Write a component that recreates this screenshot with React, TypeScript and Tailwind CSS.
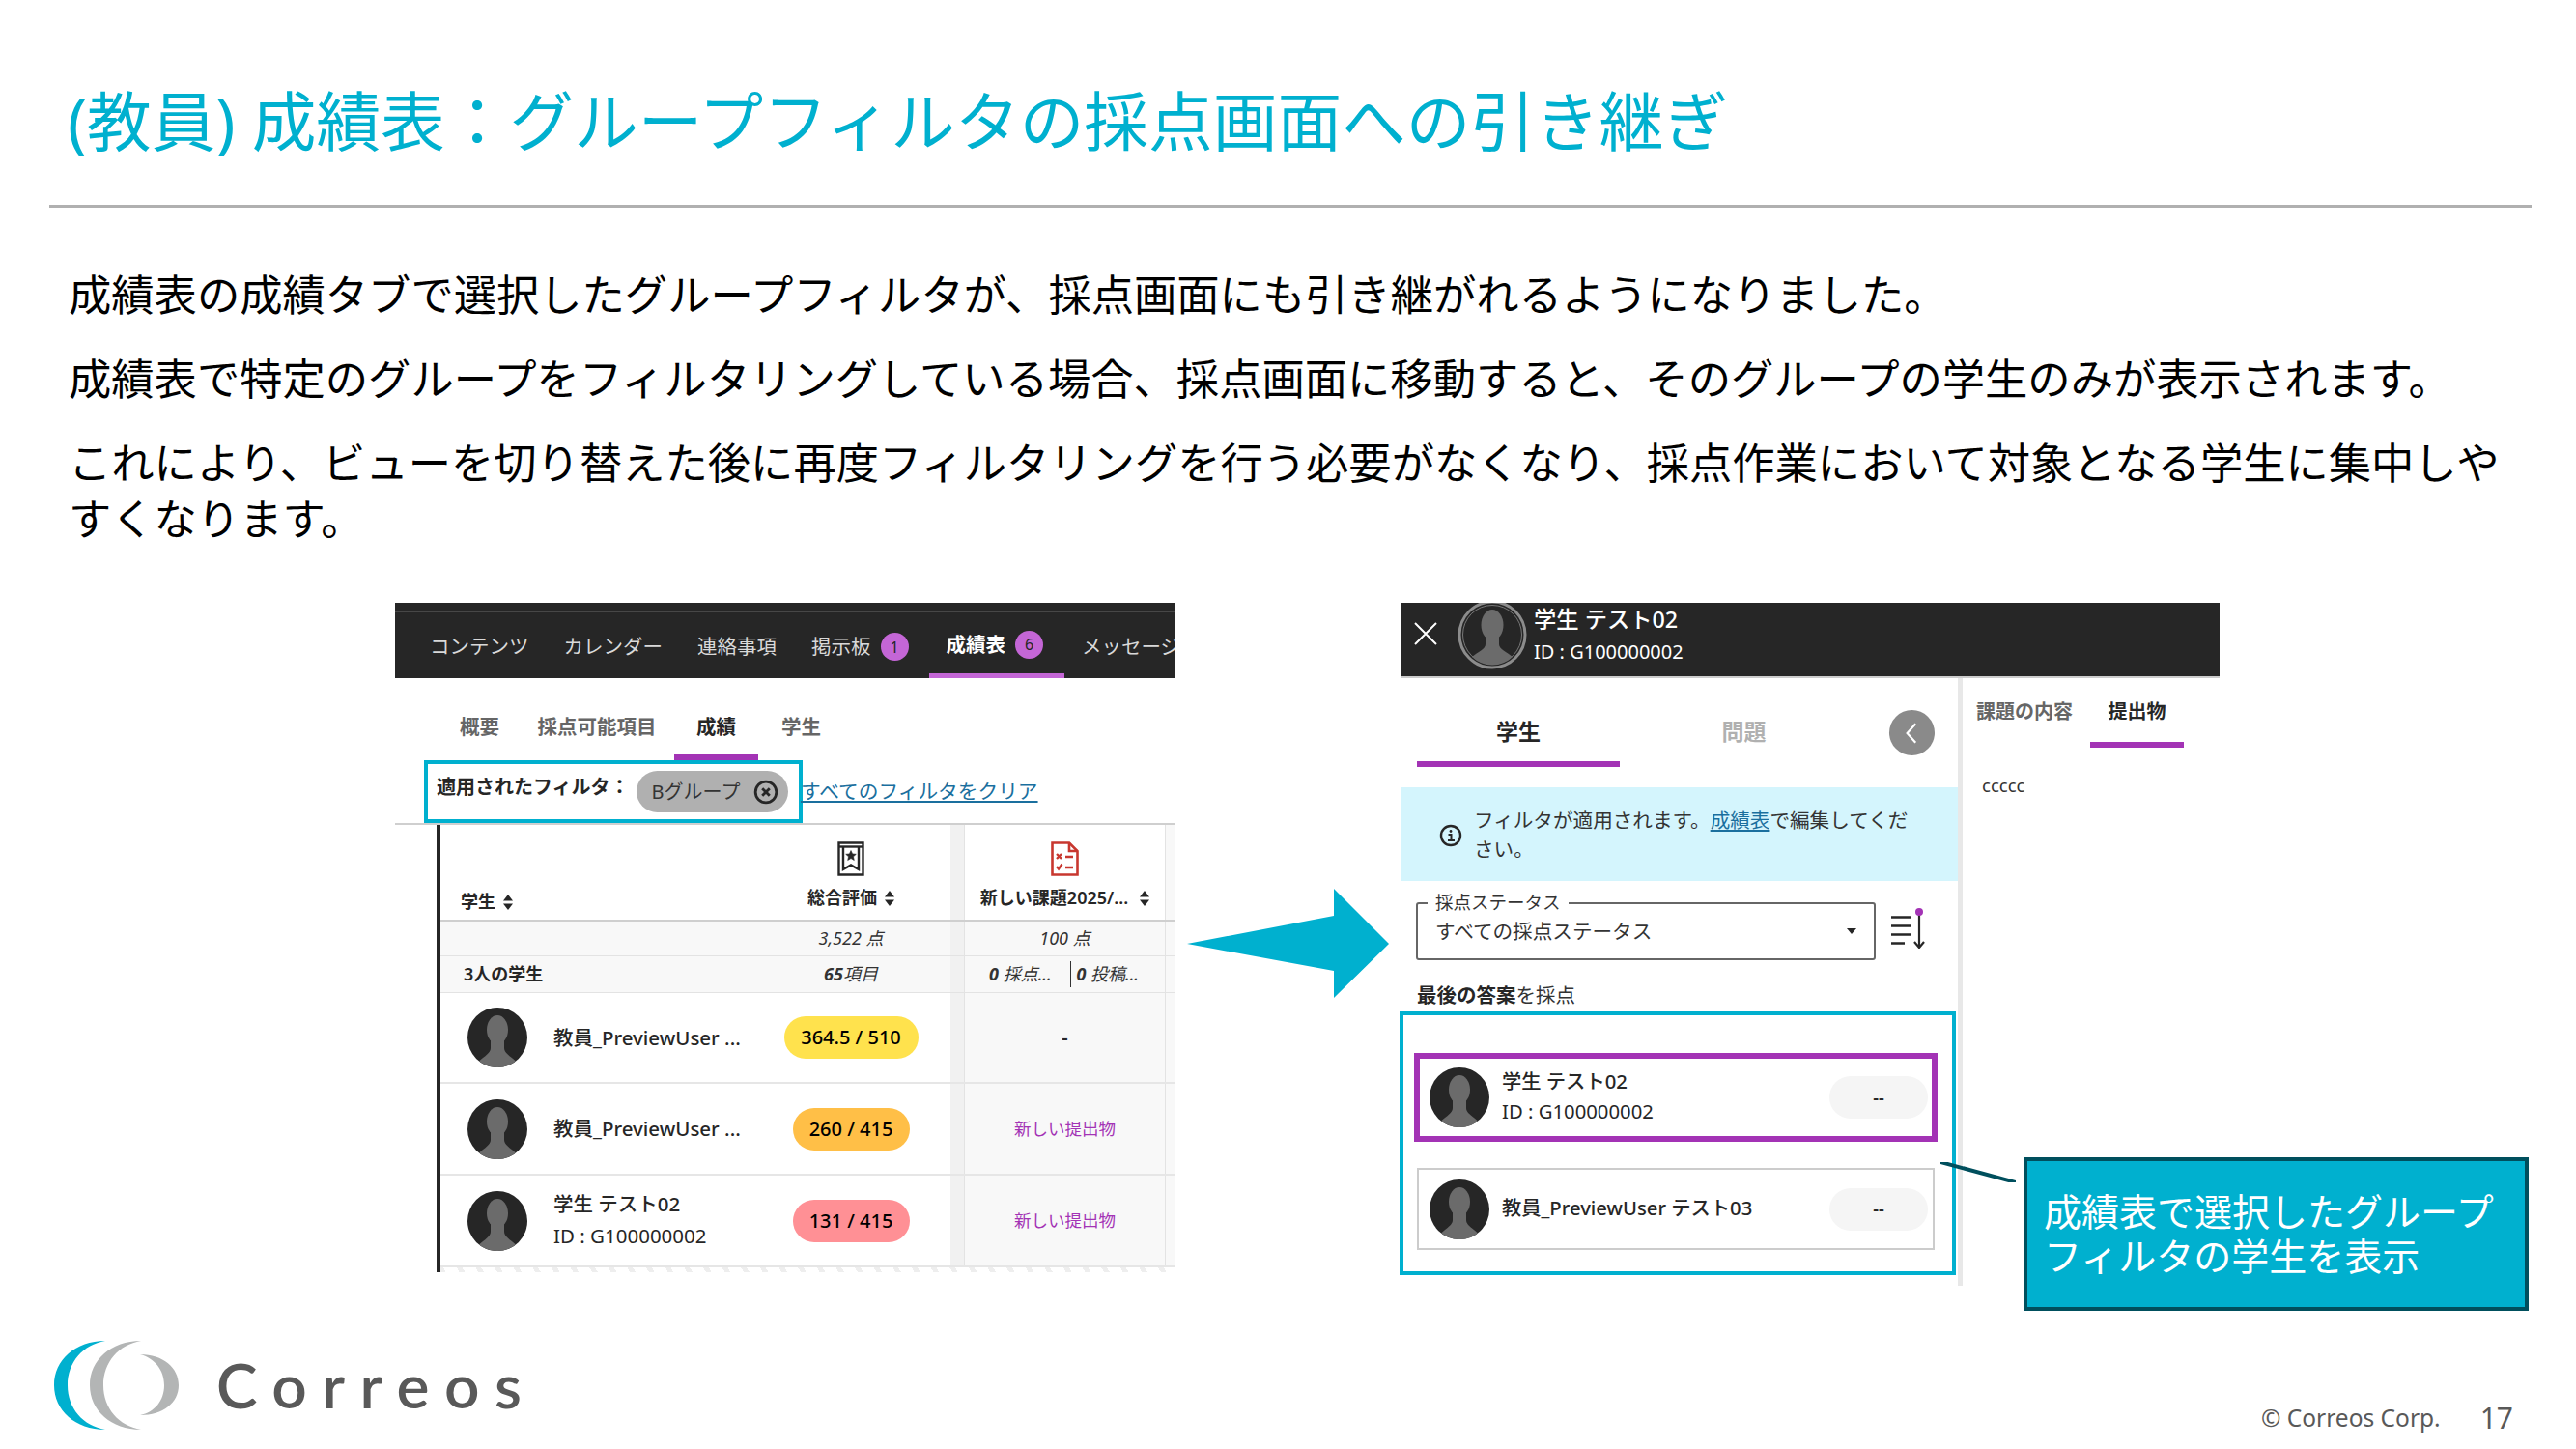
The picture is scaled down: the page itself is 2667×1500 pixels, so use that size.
import { ReactNode } from 'react';

const FONT = "font-['Noto_Sans','Noto_Sans_CJK_JP',sans-serif]";

function Avatar({ className }: { className: string }) {
  return (
    <svg viewBox="0 0 62 62" className={className}>
      <circle cx="31" cy="31" r="31" fill="#262626" />
      <ellipse cx="31" cy="23" rx="11" ry="15" fill="#6b6b6b" />
      <path d="M24 34V42C24 47 18 50 12 55.5A31 31 0 0 0 50 55.5C44 50 38 47 38 42V34Z" fill="#6b6b6b" />
    </svg>
  );
}

function SortArrows() {
  return (
    <svg viewBox="0 0 10 16" className="w-[10px] h-[16px] shrink-0" fill="#262626">
      <path d="M5 0 10 6.5H0Z" />
      <path d="M5 16 0 9.5H10Z" />
    </svg>
  );
}

function GradebookIcon() {
  return (
    <svg viewBox="0 0 28 36" className="w-[28px] h-[36px]" fill="none" stroke="#262626" strokeWidth="2.4">
      <path d="M1.5 1.5H26.5V34.5H1.5Z" />
      <path d="M1.5 5.5H26.5" />
      <path d="M6 6V29L14 24.5 22 29V6" />
      <path d="M14 9.5l1.6 3.4 3.7.4-2.8 2.5.8 3.7-3.3-1.9-3.3 1.9.8-3.7-2.8-2.5 3.7-.4Z" fill="#262626" strokeWidth="0.6" />
    </svg>
  );
}

function AssignmentIcon() {
  return (
    <svg viewBox="0 0 29 36" className="w-[29px] h-[36px]" fill="none" stroke="#c8372f" strokeWidth="2.6">
      <path d="M1.5 1.5H19L27.5 10V34.5H1.5Z" />
      <path d="M19 1.5V10H27.5" />
      <path d="M6 13l5 5M11 13l-5 5M15 16H23M6 26l2 2.5 3.5-5M15 27H23" strokeWidth="2.4" />
    </svg>
  );
}

function Row({
  student,
  score,
  last,
  className = '',
  lastClassName = 'bg-[#f8f8f8]',
}: {
  student: ReactNode;
  score: ReactNode;
  last: ReactNode;
  className?: string;
  lastClassName?: string;
}) {
  return (
    <div className={`grid grid-cols-[322px_206px_15px_208px_9px] ${className}`}>
      <div className="flex items-center min-w-0">{student}</div>
      <div className="flex items-center justify-center">{score}</div>
      <div className="bg-[#f1f1f1] border-r border-[#e3e3e3]" />
      <div className={`flex items-center justify-center border-r border-[#e3e3e3] ${lastClassName}`}>{last}</div>
      <div className="bg-[#f8f8f8]" />
    </div>
  );
}

function StudentName({ name, id }: { name: string; id?: boolean }) {
  return (
    <div className="flex items-center pl-[28px] gap-[27px] text-[20.5px] text-[#262626]">
      <Avatar className="w-[62px] h-[62px] shrink-0" />
      <div>
        <div className="font-medium leading-[31px] whitespace-nowrap">{name}</div>
        {id && <div className="leading-[34px] whitespace-nowrap">ID : G100000002</div>}
      </div>
    </div>
  );
}

function ScorePill({ text, className }: { text: string; className: string }) {
  return (
    <div className={`h-[44px] rounded-full flex items-center justify-center text-[20px] font-medium text-black ${className}`}>
      {text}
    </div>
  );
}

function GradebookPanel() {
  const navItems = ['コンテンツ', 'カレンダー', '連絡事項'];
  return (
    <div className="w-[807px] shrink-0">
      <div className="h-[78px] bg-[#262626] pt-[9px] overflow-hidden">
        <div className="h-[69px] border-t border-[#474747] flex pl-[18px] text-[20.5px] text-[#d9d9d9] whitespace-nowrap">
          {navItems.map((item) => (
            <div key={item} className="h-[68px] px-[18px] pt-[3px] flex items-center">
              {item}
            </div>
          ))}
          <div className="h-[68px] px-[18px] pt-[3px] flex items-center gap-[10px]">
            掲示板
            <span className="w-[29px] h-[29px] rounded-full bg-[#c466d6] text-[#262626] text-[16px] flex items-center justify-center">1</span>
          </div>
          <div className="h-[68px] ml-[3px] pl-[18px] pr-[22px] pt-[8px] pb-[5px] border-b-[5px] border-[#c466d6] flex items-center gap-[10px] font-bold text-white">
            成績表
            <span className="w-[29px] h-[29px] rounded-full bg-[#c466d6] text-[#262626] text-[16px] font-normal flex items-center justify-center">6</span>
          </div>
          <div className="h-[68px] pl-[18px] pt-[3px] flex items-center">メッセージ</div>
        </div>
      </div>

      <div className="flex ml-[46px] text-[20.5px] font-semibold text-[#666666] leading-[28px]">
        <div className="w-[83px] h-[85px] pt-[36px] text-center">概要</div>
        <div className="w-[160px] h-[85px] pt-[36px] text-center">採点可能項目</div>
        <div className="w-[87px] h-[85px] pt-[36px] text-center border-b-[6px] border-[#a333b5] text-[#262626]">成績</div>
        <div className="w-[89px] h-[85px] pt-[36px] text-center">学生</div>
      </div>

      <div className="flex items-stretch ml-[30px] h-[65px]">
        <div className="w-[392px] border-[4px] border-[#00b0cf] flex items-center pl-[9px] gap-[7px]">
          <span className="text-[20px] font-semibold text-[#262626] whitespace-nowrap -mt-[10px]">適用されたフィルタ：</span>
          <div className="w-[157px] h-[43px] rounded-full bg-[#b0b0b0] flex items-center pl-[16px] gap-[14px] text-[20px] text-[#333333] whitespace-nowrap">
            Bグループ
            <svg viewBox="0 0 24 24" className="w-[26px] h-[26px]" fill="none" stroke="#262626" strokeWidth="2.6">
              <circle cx="12" cy="12" r="10" />
              <path d="M8.5 8.5l7 7M15.5 8.5l-7 7" />
            </svg>
          </div>
        </div>
        <a className="text-[20.7px] text-[#1a6f9e] underline underline-offset-2 -ml-[2px] mt-[17px] h-[30px] leading-[30px] whitespace-nowrap">すべてのフィルタをクリア</a>
      </div>

      <div className="border-t-[2px] border-[#cfcfcf]">
        <div className="ml-[43px] border-l-[4px] border-[#262626]">
          <Row
            className="h-[100px] border-b-[2px] border-[#cfcfcf] text-[18px] font-semibold text-[#262626]"
            lastClassName=""
            student={
              <div className="self-end flex items-center gap-[8px] pl-[21px] pb-[5px]">
                学生
                <SortArrows />
              </div>
            }
            score={
              <div className="flex flex-col items-center gap-[9px] pt-[8px]">
                <GradebookIcon />
                <div className="flex items-center gap-[8px]">
                  総合評価
                  <SortArrows />
                </div>
              </div>
            }
            last={
              <div className="flex flex-col items-center gap-[9px] pt-[8px]">
                <AssignmentIcon />
                <div className="flex items-center gap-[12px] whitespace-nowrap">
                  新しい課題2025/...
                  <SortArrows />
                </div>
              </div>
            }
          />
          <Row
            className="h-[36px] bg-[#f8f8f8] border-b border-[#e3e3e3] text-[18px] italic text-[#333333]"
            student={null}
            score="3,522 点"
            last="100 点"
          />
          <Row
            className="h-[38px] bg-[#f8f8f8] border-b border-[#e3e3e3] text-[18px] italic text-[#333333]"
            student={<span className="pl-[24px] not-italic font-semibold text-[#262626]">3人の学生</span>}
            score={
              <span>
                <b>65</b>項目
              </span>
            }
            last={
              <div className="flex items-center whitespace-nowrap -ml-[2px]">
                <span className="pr-[19px]"><b>0</b> 採点...</span>
                <span className="border-l border-[#333333] pl-[6px]"><b>0</b> 投稿...</span>
              </div>
            }
          />
          <Row
            className="h-[94px] border-b-[2px] border-[#e6e6e6]"
            student={<StudentName name="教員_PreviewUser ..." />}
            score={<ScorePill text="364.5 / 510" className="w-[139px] bg-[#ffe24d]" />}
            last={<span className="text-[20px] font-semibold text-[#262626]">-</span>}
          />
          <Row
            className="h-[95px] border-b-[2px] border-[#e6e6e6]"
            student={<StudentName name="教員_PreviewUser ..." />}
            score={<ScorePill text="260 / 415" className="w-[121px] bg-[#ffbf47]" />}
            last={<span className="text-[17.5px] text-[#a333b5]">新しい提出物</span>}
          />
          <Row
            className="h-[95px] border-b-[2px] border-[#e6e6e6]"
            student={<StudentName name="学生 テスト02" id />}
            score={<ScorePill text="131 / 415" className="w-[121px] bg-[#ff9095]" />}
            last={<span className="text-[17.5px] text-[#a333b5]">新しい提出物</span>}
          />
          <div className="h-[5px] bg-[repeating-linear-gradient(60deg,#eeeeee_0,#eeeeee_5px,#ffffff_5px,#ffffff_17px)]" />
        </div>
      </div>
    </div>
  );
}

function SubmissionCard({
  name,
  id,
  className,
}: {
  name: string;
  id?: boolean;
  className: string;
}) {
  return (
    <div className={`flex items-center justify-between ${className}`}>
      <div className="flex items-center gap-[13px] min-w-0">
        <Avatar className="w-[62px] h-[62px] shrink-0" />
        <div className="text-[20.3px] text-[#262626] whitespace-nowrap -mt-[2px]">
          <div className="font-medium leading-[31px]">{name}</div>
          {id && <div className="leading-[31px]">ID : G100000002</div>}
        </div>
      </div>
      <div className="w-[102px] h-[44px] rounded-full bg-[#f5f5f5] flex items-center justify-center text-[18px] font-semibold text-[#262626]">
        --
      </div>
    </div>
  );
}

function GradingPanel() {
  return (
    <div className="w-[847px] shrink-0">
      <div className="h-[78px] bg-[#262626] border-b-[2px] border-[#cccccc] flex items-start overflow-hidden">
        <svg viewBox="0 0 24 24" className="ml-[13px] mt-[20px] w-[24px] h-[24px] shrink-0" fill="none" stroke="#ffffff" strokeWidth="2">
          <path d="M1 1l22 22M23 1L1 23" />
        </svg>
        <svg viewBox="0 0 72 72" className="ml-[21px] -mt-[3px] w-[72px] h-[72px] shrink-0">
          <circle cx="36" cy="36" r="34" fill="#262626" stroke="#8c8c8c" strokeWidth="3" />
          <circle cx="36" cy="36" r="30.5" fill="none" stroke="#8c8c8c" strokeWidth="0.8" />
          <ellipse cx="36" cy="26" rx="11.5" ry="16" fill="#6b6b6b" />
          <path d="M29 38V46C29 51 21 54 15 59A30 30 0 0 0 57 59C51 54 43 51 43 46V38Z" fill="#6b6b6b" />
        </svg>
        <div className="ml-[7px] text-white whitespace-nowrap">
          <div className="text-[23.3px] font-medium leading-[34px]">学生 テスト02</div>
          <div className="text-[20px] leading-[34px]">ID : G100000002</div>
        </div>
      </div>

      <div className="flex">
        <div className="w-[576px] h-[629px] shrink-0">
          <div className="h-[113px] relative">
            <div className="flex pl-[16px] text-[23px] font-bold leading-[30px]">
              <div className="w-[210px] h-[92px] pt-[40px] text-center border-b-[6px] border-[#a333b5] text-[#262626]">学生</div>
              <div className="w-[213px] h-[92px] pt-[40px] text-center text-[#b0b0b0] ml-[22px]">問題</div>
              <div className="ml-[44px] mt-[33px] w-[47px] h-[47px] rounded-full bg-[#8a8a8a] flex items-center justify-center">
                <svg viewBox="0 0 24 24" className="w-[26px] h-[26px]" fill="none" stroke="#ffffff" strokeWidth="2">
                  <path d="M15 3 7 12l8 9" />
                </svg>
              </div>
            </div>
          </div>

          <div className="h-[97px] bg-[#d4f5fd] flex items-center pl-[39px] gap-[12px]">
            <svg viewBox="0 0 24 24" className="w-[24px] h-[24px] shrink-0 mt-[2px]" fill="none" stroke="#262626" strokeWidth="2.4">
              <circle cx="12" cy="12" r="10" />
              <path d="M9.5 11H12.5V17M9 17H16" strokeWidth="2" />
              <circle cx="12" cy="7.5" r="1.4" fill="#262626" stroke="none" />
            </svg>
            <p className="w-[460px] text-[20.6px] leading-[30px] text-[#333333]">
              フィルタが適用されます。<a className="text-[#1a6f9e] underline underline-offset-2">成績表</a>で編集してください。
            </p>
          </div>

          <div className="flex items-start pl-[15px] pt-[22px]">
            <div className="relative w-[476px] h-[60px] border-[2px] border-[#666666] rounded-[3px] flex items-center justify-between pl-[18px] pr-[18px] text-[20.6px] text-[#333333]">
              <span className="absolute -top-[15px] left-[10px] bg-white px-[8px] text-[18.5px] leading-[26px] text-[#333333]">採点ステータス</span>
              <span className="whitespace-nowrap">すべての採点ステータス</span>
              <svg viewBox="0 0 10 6" className="w-[10px] h-[6px]" fill="#262626">
                <path d="M0 0H10L5 6Z" />
              </svg>
            </div>
            <svg viewBox="0 0 36 42" className="ml-[16px] mt-[6px] w-[36px] h-[42px]" fill="none" stroke="#262626" strokeWidth="2.6">
              <path d="M0 9.5H21M0 18.5H21M0 27.5H21M0 36.5H14" />
              <path d="M29 5V40M24 35l5 6 5-6" strokeWidth="2.2" />
              <circle cx="29" cy="4" r="4" fill="#a333b5" stroke="none" />
            </svg>
          </div>

          <div className="pl-[16px] pt-[21px] text-[20.5px] leading-[30px] text-[#333333]">
            <b className="font-semibold text-[#262626]">最後の答案</b>を採点
          </div>

          <div className="ml-[-2px] mt-[2px] w-[576px] h-[273px] border-[4px] border-[#00b0cf] pl-[11px] pr-[15px] pt-[39px]">
            <SubmissionCard
              name="学生 テスト02"
              id
              className="h-[92px] border-[6px] border-[#a333b5] pl-[10px] pr-[4px]"
            />
            <SubmissionCard
              name="教員_PreviewUser テスト03"
              className="h-[85px] mt-[27px] mx-[3px] border-[2px] border-[#cccccc] pl-[11px] pr-[5px]"
            />
          </div>
        </div>

        <div className="w-[5px] h-[629px] bg-[#e8e8e8] shrink-0" />

        <div className="flex-1 min-w-0">
          <div className="flex ml-[14px] h-[72px] text-[20px] font-semibold leading-[28px]">
            <div className="w-[118px] pt-[21px] text-[#666666] whitespace-nowrap">課題の内容</div>
            <div className="w-[97px] h-[72px] pt-[21px] text-center border-b-[6px] border-[#a333b5] text-[#262626]">提出物</div>
          </div>
          <div className="pl-[20px] pt-[25px] text-[18.5px] leading-[28px] text-[#333333]">ccccc</div>
        </div>
      </div>
    </div>
  );
}

function Logo() {
  return (
    <div className="flex items-center">
      <svg viewBox="0 0 130 92" className="w-[130px] h-[92px] shrink-0">
        <path d="M53 0C22 0 0 20 0 46S22 92 53 92C30 88 14 70 14 46S30 4 53 0Z" fill="#00b0cf" />
        <path d="M90 0C59 0 37 20 37 46S59 92 90 92C67 88 51 70 51 46S67 4 90 0Z" fill="#b3b5b5" />
        <path d="M89 14C113 14 129 28 129 46S113 77 89 77C104 74 114 62 114 46S104 18 89 14Z" fill="#b3b5b5" />
      </svg>
      <span className="ml-[38px] font-['Lato',sans-serif] text-[64px] leading-[64px] font-semibold tracking-[15.5px] text-[#595959]">Correos</span>
    </div>
  );
}

export default function App() {
  return (
    <div className={`relative w-[2667px] h-[1500px] overflow-hidden bg-white flex flex-col ${FONT}`}>
      <h1 className="h-[212px] pt-[78px] pl-[70px] text-[66.7px] leading-[96px] font-normal text-[#00b0cf] whitespace-nowrap">
        (教員) 成績表：グループフィルタの採点画面への引き継ぎ
      </h1>
      <div className="ml-[51px] mr-[46px] h-[3px] bg-[#b0b0b0] shrink-0" />

      <div className="pl-[71px] pr-[50px] pt-[61px] text-[44.3px] leading-[58px] text-black flex flex-col gap-[29px]">
        <p className="whitespace-nowrap">成績表の成績タブで選択したグループフィルタが、採点画面にも引き継がれるようになりました。</p>
        <p className="whitespace-nowrap">成績表で特定のグループをフィルタリングしている場合、採点画面に移動すると、そのグループの学生のみが表示されます。</p>
        <p>これにより、ビューを切り替えた後に再度フィルタリングを行う必要がなくなり、採点作業において対象となる学生に集中しやすくなります。</p>
      </div>

      <div className="flex pl-[409px] mt-[58px]">
        <GradebookPanel />
        <div className="w-[235px] shrink-0 pl-[13px] pt-[296px]">
          <svg viewBox="0 0 209 113" className="w-[209px] h-[113px]">
            <path d="M0 57 152 28V0L209 57 152 113V85Z" fill="#00b0cf" />
          </svg>
        </div>
        <GradingPanel />
      </div>

      {/* callout over the lower right of the slide */}
      <svg viewBox="0 0 78 21" className="absolute left-[2009px] top-[1203px] w-[78px] h-[21px]">
        <path d="M0 0 78 21" stroke="#004f5d" strokeWidth="4" />
      </svg>
      <div className="absolute left-[2095px] top-[1198px] w-[523px] h-[159px] bg-[#00b0cf] border-[4px] border-[#004f5d] pl-[17px] pt-[29px] text-[39px] leading-[46px] text-white whitespace-nowrap">
        成績表で選択したグループ
        <br />
        フィルタの学生を表示
      </div>

      <div className="absolute left-[56px] top-[1388px]">
        <Logo />
      </div>
      <div className="absolute right-[65px] top-[1448px] flex items-center gap-[41px] text-[#595959]">
        <span className="text-[24.5px] leading-[40px]">© Correos Corp.</span>
        <span className="text-[30px] leading-[40px]">17</span>
      </div>
    </div>
  );
}
